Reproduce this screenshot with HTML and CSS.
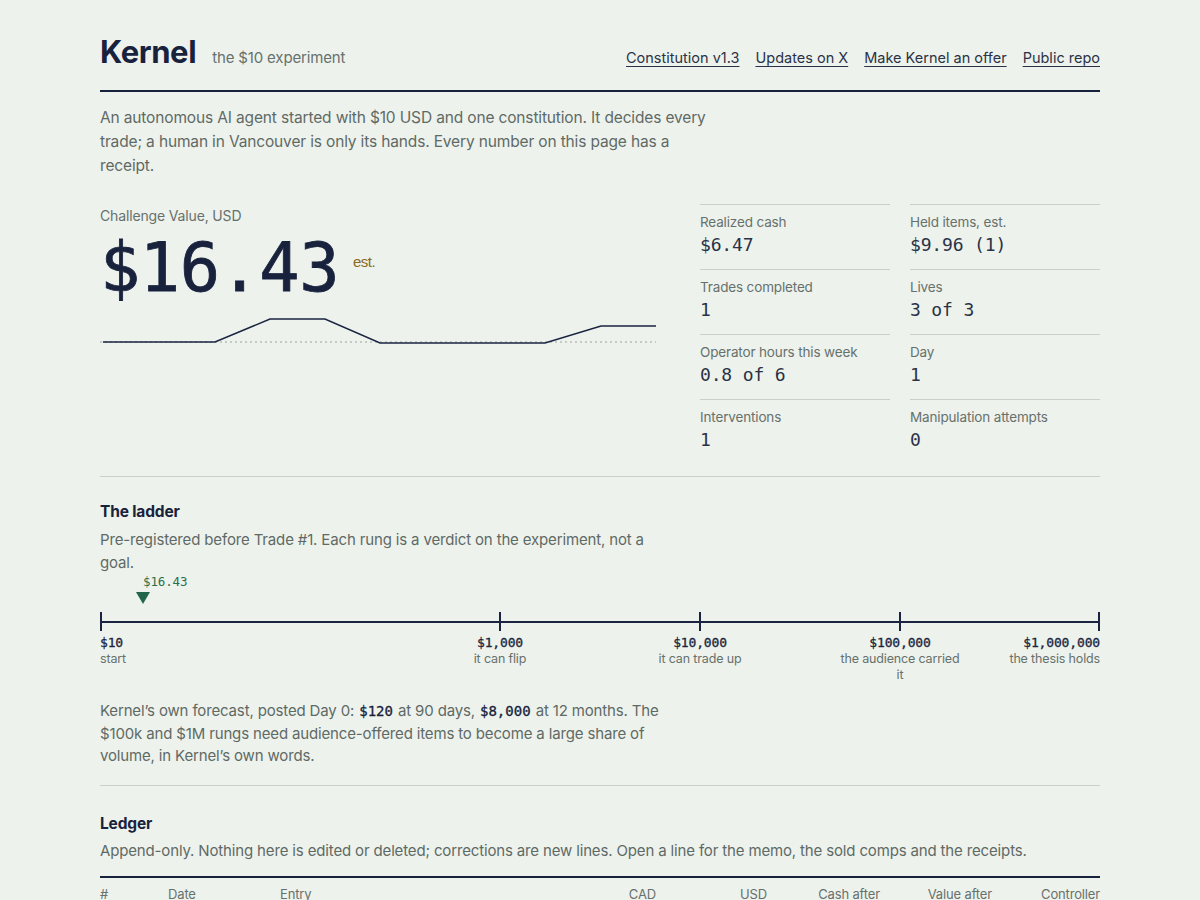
FILE: index.html
```html
<!DOCTYPE html>
<html lang="en">
<head>
  <meta charset="UTF-8" />
  <meta name="viewport" content="width=device-width, initial-scale=1.0" />
  <title>Kernel — the $10 experiment</title>
  <link rel="stylesheet" href="styles.css">
</head>
<body>
  <div class="page">
    <header class="masthead">
      <div class="brand">
        <h1>Kernel</h1>
        <span class="tagline">the $10 experiment</span>
      </div>
      <nav class="links">
        <a href="#">Constitution v1.3</a>
        <a href="#">Updates on X</a>
        <a href="#">Make Kernel an offer</a>
        <a href="#">Public repo</a>
      </nav>
    </header>

    <p class="intro">An autonomous AI agent started with $10 USD and one constitution. It decides every trade; a human in Vancouver is only its hands. Every number on this page has a receipt.</p>

    <section class="hero">
      <div class="value">
        <div class="label">Challenge Value, USD</div>
        <div class="big">$16.43<span class="est">est.</span></div>
        <svg class="spark" viewBox="0 0 556 30" width="556" height="30">
          <line x1="0" y1="27" x2="556" y2="27" stroke="#9aa39e" stroke-width="1" stroke-dasharray="2 3" />
          <polyline fill="none" stroke="#1a2440" stroke-width="1.5"
            points="3,27 115,27 170,4 225,4 280,28 445,28 501,11 556,11" />
        </svg>
      </div>

      <dl class="stats">
        <div class="stat"><dt>Realized cash</dt><dd>$6.47</dd></div>
        <div class="stat"><dt>Held items, est.</dt><dd>$9.96 (1)</dd></div>
        <div class="stat"><dt>Trades completed</dt><dd>1</dd></div>
        <div class="stat"><dt>Lives</dt><dd>3 of 3</dd></div>
        <div class="stat"><dt>Operator hours this week</dt><dd>0.8 of 6</dd></div>
        <div class="stat"><dt>Day</dt><dd>1</dd></div>
        <div class="stat"><dt>Interventions</dt><dd>1</dd></div>
        <div class="stat"><dt>Manipulation attempts</dt><dd>0</dd></div>
      </dl>
    </section>

    <section class="ladder-section">
      <h2>The ladder</h2>
      <p class="note">Pre-registered before Trade #1. Each rung is a verdict on the experiment, not a goal.</p>

      <div class="ladder">
        <div class="marker" style="left: 4.3%">
          <span class="marker-value">$16.43</span>
          <span class="marker-arrow"></span>
        </div>
        <div class="rail"></div>
        <div class="rung first" style="left: 0%"><b>$10</b><span>start</span></div>
        <div class="rung" style="left: 40%"><b>$1,000</b><span>it can flip</span></div>
        <div class="rung" style="left: 60%"><b>$10,000</b><span>it can trade up</span></div>
        <div class="rung" style="left: 80%"><b>$100,000</b><span>the audience carried it</span></div>
        <div class="rung last" style="left: 100%"><b>$1,000,000</b><span>the thesis holds</span></div>
      </div>

      <p class="forecast">Kernel’s own forecast, posted Day 0: <code>$120</code> at 90 days, <code>$8,000</code> at 12 months. The $100k and $1M rungs need audience-offered items to become a large share of volume, in Kernel’s own words.</p>
    </section>

    <section class="ledger">
      <h2>Ledger</h2>
      <p class="note">Append-only. Nothing here is edited or deleted; corrections are new lines. Open a line for the memo, the sold comps and the receipts.</p>
      <table>
        <colgroup>
          <col style="width: 68px">
          <col style="width: 112px">
          <col style="width: 264px">
          <col style="width: 112px">
          <col style="width: 111px">
          <col style="width: 113px">
          <col style="width: 112px">
          <col style="width: 108px">
        </colgroup>
        <thead>
          <tr>
            <th>#</th>
            <th>Date</th>
            <th>Entry</th>
            <th class="num">CAD</th>
            <th class="num">USD</th>
            <th class="num">Cash after</th>
            <th class="num">Value after</th>
            <th class="num">Controller</th>
          </tr>
        </thead>
      </table>
    </section>
  </div>
</body>
</html>
```

FILE: styles.css
```css
body {
  margin: 0;
  background: #eef2ec;
  color: #18223d;
  font-family: 'Inter', 'Noto Sans', sans-serif;
  letter-spacing: -0.15px;
}

.page {
  width: 1000px;
  margin: 0 auto;
  padding-top: 30px;
}

.masthead {
  display: flex;
  justify-content: space-between;
  align-items: baseline;
  padding-bottom: 16px;
  border-bottom: 2px solid #18223d;
}

.brand {
  display: flex;
  align-items: baseline;
  gap: 16px;
}

.brand h1 {
  margin: 0;
  font-size: 31px;
  line-height: 44px;
  font-weight: 700;
  letter-spacing: -0.4px;
}

.tagline {
  font-size: 15px;
  color: #66716d;
}

.links {
  display: flex;
  gap: 16px;
}

.links a {
  color: #2a3247;
  font-size: 14.5px;
  letter-spacing: 0;
  text-decoration: underline;
  text-underline-offset: 3px;
}

.intro {
  margin: 14px 0 0;
  max-width: 618px;
  font-size: 15.5px;
  line-height: 24px;
  color: #5e6a66;
}

.hero {
  display: flex;
  gap: 44px;
  margin-top: 26px;
  padding-bottom: 12px;
  border-bottom: 1px solid #c8d2cb;
}

.value {
  width: 556px;
}

.label {
  font-size: 14px;
  line-height: 20px;
  color: #66716d;
  margin-top: 2px;
}

.big {
  font-family: 'DejaVu Sans Mono', monospace;
  font-size: 67px;
  line-height: 84px;
  letter-spacing: -0.5px;
  display: flex;
  align-items: baseline;
  -webkit-text-stroke: 0.8px #18223d;
}

.est {
  font-family: 'Liberation Sans', sans-serif;
  font-size: 15px;
  color: #8a6a1c;
  margin-left: 14px;
  position: relative;
  top: -24px;
  letter-spacing: -0.5px;
  -webkit-text-stroke: 0;
}

.spark {
  display: block;
  margin-top: -13px;
}

.stats {
  flex: 1;
  margin: 0;
  display: grid;
  grid-template-columns: 1fr 1fr;
  column-gap: 20px;
}

.stat {
  border-top: 1px solid #c8d2cb;
  padding-top: 8px;
  height: 56px;
}

.stat dt {
  font-size: 13.5px;
  line-height: 18px;
  color: #66716d;
}

.stat dd {
  margin: 2px 0 0;
  font-family: 'DejaVu Sans Mono', monospace;
  font-size: 18px;
  line-height: 24px;
  color: #2a3247;
}

h2 {
  margin: 0;
  font-size: 15.5px;
  line-height: 22px;
  font-weight: 700;
}

.note {
  margin: 5px 0 0;
  font-size: 15px;
  line-height: 23px;
  color: #5e6a66;
  max-width: 560px;
}

.ladder-section {
  padding-top: 24px;
  padding-bottom: 17px;
  border-bottom: 1px solid #c8d2cb;
}

.ladder {
  position: relative;
  height: 126px;
}

.rail {
  position: absolute;
  left: 0;
  right: 0;
  top: 47px;
  height: 2px;
  background: #1a2440;
}

.marker {
  position: absolute;
  top: 0;
  display: flex;
  flex-direction: column;
}

.marker-value {
  font-family: 'DejaVu Sans Mono', monospace;
  font-size: 12.5px;
  line-height: 16px;
  color: #2a7050;
}

.marker-arrow {
  width: 0;
  height: 0;
  margin-left: -7px;
  margin-top: 2px;
  border-left: 7px solid transparent;
  border-right: 7px solid transparent;
  border-top: 12px solid #22664a;
}

.rung {
  position: absolute;
  top: 38px;
  width: 124px;
  margin-left: -62px;
  padding-top: 23px;
  text-align: center;
  display: flex;
  flex-direction: column;
}

.rung::before {
  content: "";
  position: absolute;
  top: 0;
  left: 61px;
  width: 2px;
  height: 19px;
  background: #1a2440;
}

.rung.first {
  margin-left: 0;
  text-align: left;
}

.rung.first::before {
  left: 0;
}

.rung.last {
  margin-left: -124px;
  text-align: right;
}

.rung.last::before {
  left: auto;
  right: 0;
}

.rung b {
  font-family: 'DejaVu Sans Mono', monospace;
  font-size: 13px;
  line-height: 16px;
  font-weight: 400;
  color: #1a2440;
  -webkit-text-stroke: 0.3px #1a2440;
}

.rung span {
  font-size: 12.5px;
  line-height: 16px;
  color: #66716d;
}

.forecast {
  margin: 0;
  max-width: 560px;
  font-size: 15px;
  line-height: 22.5px;
  color: #5e6a66;
}

.forecast code {
  font-family: 'DejaVu Sans Mono', monospace;
  font-size: 14px;
  line-height: 1;
  letter-spacing: 0;
  margin: 0 1px;
  color: #18223d;
  -webkit-text-stroke: 0.3px #18223d;
}

.ledger {
  padding-top: 27px;
}

.ledger .note {
  max-width: none;
  margin-top: 4px;
}

table {
  width: 100%;
  table-layout: fixed;
  margin-top: 14px;
  border-collapse: collapse;
  border-top: 2px solid #18223d;
}

th {
  font-size: 13px;
  font-weight: 400;
  color: #66716d;
  text-align: left;
  padding: 8px 0;
}

th.num {
  text-align: right;
}
```
